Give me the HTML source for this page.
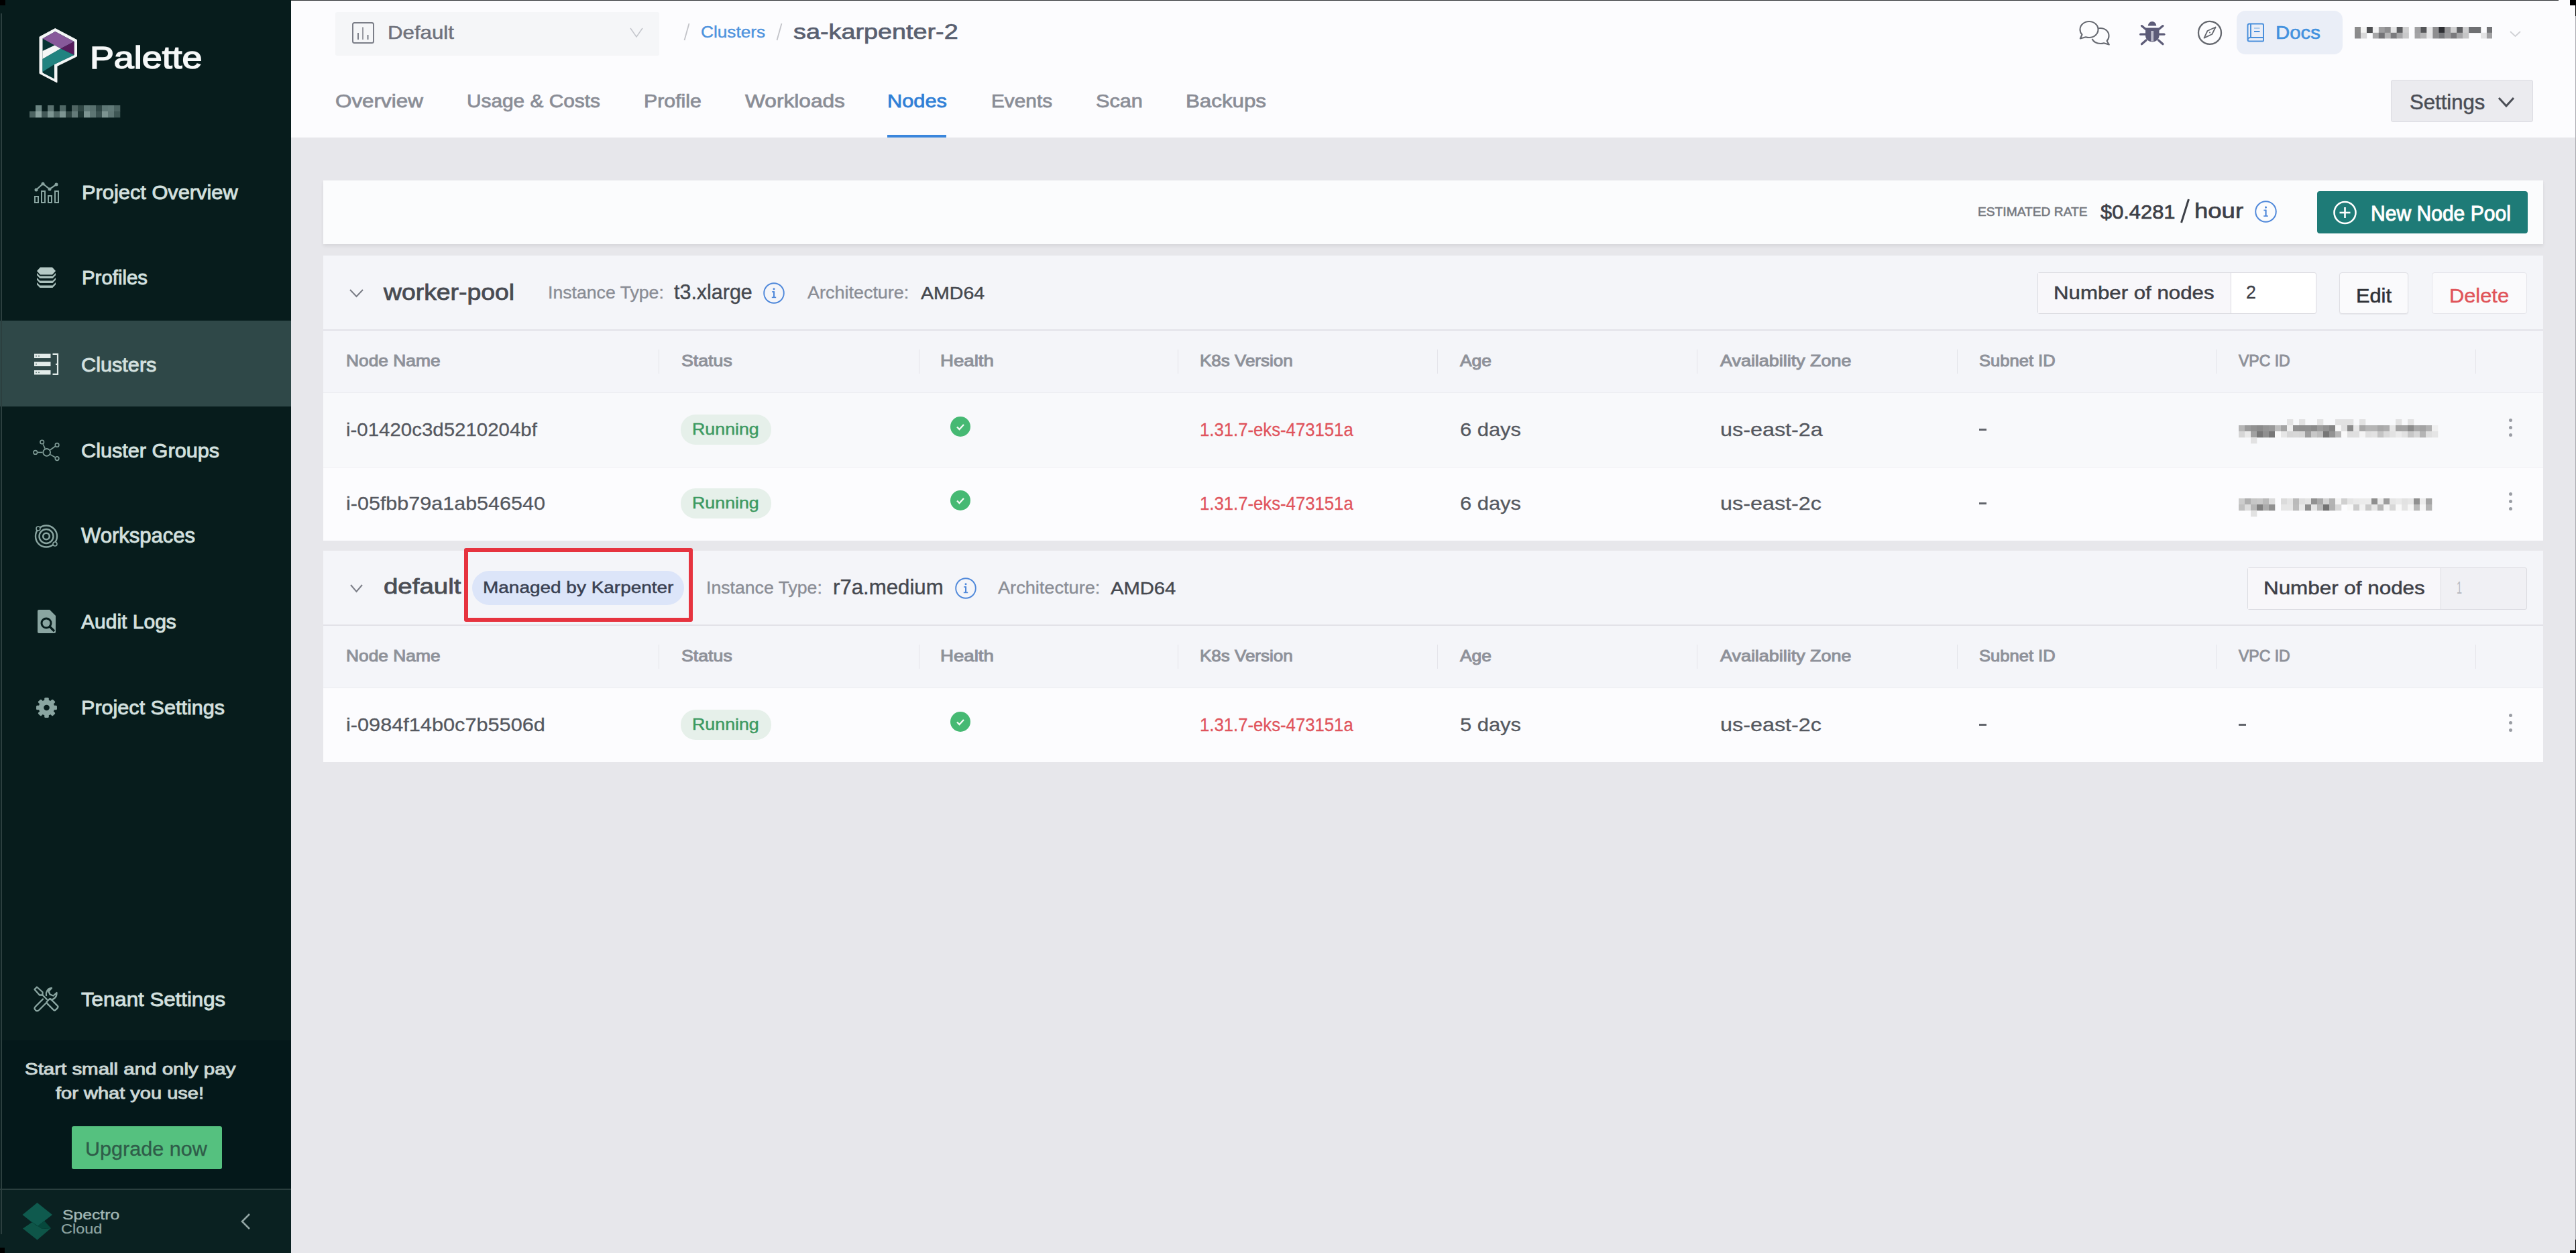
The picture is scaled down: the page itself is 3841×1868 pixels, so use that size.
<!DOCTYPE html><html><head><meta charset="utf-8"><title>Palette - Nodes</title><style>
*{margin:0;padding:0;box-sizing:border-box}
html,body{width:3841px;height:1868px;overflow:hidden;background:#e8e7ec}
body{position:relative;font-family:"Liberation Sans",sans-serif}
.t{position:absolute;white-space:nowrap;transform-origin:0 0}
.b{position:absolute}
.s{position:absolute;overflow:visible}
</style></head><body><div class="b" style="left:0px;top:0px;width:434px;height:1868px;background:#071c1c;"></div>
<div class="b" style="left:0px;top:478px;width:434px;height:128px;background:#2f4848;"></div>
<div class="b" style="left:0px;top:1551px;width:434px;height:221px;background:#04181a;"></div>
<div class="b" style="left:0px;top:1772px;width:434px;height:2px;background:#2a3e3e;"></div>
<div class="b" style="left:0px;top:1774px;width:434px;height:94px;background:#0a2121;"></div>
<svg class="s" style="left:50px;top:36px;width:74px;height:94px;" viewBox="0 0 74 94" preserveAspectRatio="none"><path d="M32.3 6.5 L64.5 23.5 L64.5 48 L35 62.5 L35 87 L9 73.5 L9 19 Z" fill="#f4f6f6" stroke="#f4f6f6" stroke-width="1" stroke-linejoin="round"/><path d="M32.3 11 L60.5 26 L60.5 46 L31 60 L31 81.5 L13.5 72.5 L13.5 21.5 Z" fill="#073535"/><path d="M13.5 21.5 L32.3 11 L60.5 26 L40.5 36.5 L31.5 31.5 Z" fill="#87599a"/><path d="M40.5 36.5 L60.5 26 L60.5 46 Z" fill="#561b5c"/><path d="M13.5 40 L31.5 31.5 L40.5 36.5 L13.5 52 Z" fill="#f4f6f6"/><path d="M13.5 52 L40.5 36.5 L60.5 46 L31 60 L13.5 71 Z" fill="#218380"/></svg>
<div class="t" style="left:134.00px;top:63.58px;font-size:45.39px;line-height:45.39px;color:#f6f8f8;transform:scaleX(1.1852);-webkit-text-stroke:1.5px #f6f8f8;">Palette</div>
<svg class="s" style="left:44px;top:157px;width:135px;height:18px;" viewBox="0 0 135 18" preserveAspectRatio="none"><rect x="9" y="0" width="9.3" height="9.3" fill="#6b8582"/><rect x="27" y="0" width="9.3" height="9.3" fill="#5a716f"/><rect x="45" y="0" width="9.3" height="9.3" fill="#4f6765"/><rect x="63" y="0" width="9.3" height="9.3" fill="#4f6462"/><rect x="72" y="0" width="9.3" height="9.3" fill="#2f4644"/><rect x="81" y="0" width="9.3" height="9.3" fill="#5f7876"/><rect x="90" y="0" width="9.3" height="9.3" fill="#58706e"/><rect x="99" y="0" width="9.3" height="9.3" fill="#2e4544"/><rect x="108" y="0" width="9.3" height="9.3" fill="#5d7674"/><rect x="117" y="0" width="9.3" height="9.3" fill="#617a78"/><rect x="126" y="0" width="9.3" height="9.3" fill="#4c6462"/><rect x="0" y="9" width="9.3" height="9.3" fill="#4c6361"/><rect x="9" y="9" width="9.3" height="9.3" fill="#8aa19e"/><rect x="18" y="9" width="9.3" height="9.3" fill="#425857"/><rect x="27" y="9" width="9.3" height="9.3" fill="#7d9592"/><rect x="36" y="9" width="9.3" height="9.3" fill="#4f6664"/><rect x="45" y="9" width="9.3" height="9.3" fill="#7d9592"/><rect x="54" y="9" width="9.3" height="9.3" fill="#2f4543"/><rect x="63" y="9" width="9.3" height="9.3" fill="#647b79"/><rect x="72" y="9" width="9.3" height="9.3" fill="#1f3634"/><rect x="81" y="9" width="9.3" height="9.3" fill="#7c9491"/><rect x="90" y="9" width="9.3" height="9.3" fill="#5d7573"/><rect x="99" y="9" width="9.3" height="9.3" fill="#3a5150"/><rect x="108" y="9" width="9.3" height="9.3" fill="#7c9491"/><rect x="117" y="9" width="9.3" height="9.3" fill="#5f7775"/><rect x="126" y="9" width="9.3" height="9.3" fill="#3e5654"/></svg>
<div class="t" style="left:121.70px;top:272.51px;font-size:29.05px;line-height:29.05px;color:#d3e0df;transform:scaleX(1.0601);-webkit-text-stroke:0.9px #d3e0df;">Project Overview</div>
<div class="t" style="left:121.70px;top:400.21px;font-size:29.05px;line-height:29.05px;color:#d3e0df;transform:scaleX(1.0119);-webkit-text-stroke:0.9px #d3e0df;">Profiles</div>
<div class="t" style="left:121.40px;top:528.75px;font-size:29.47px;line-height:29.47px;color:#d3e0df;transform:scaleX(1.0402);-webkit-text-stroke:0.9px #d3e0df;">Clusters</div>
<div class="t" style="left:121.40px;top:656.58px;font-size:30.03px;line-height:30.03px;color:#d3e0df;transform:scaleX(1.0211);-webkit-text-stroke:0.9px #d3e0df;">Cluster Groups</div>
<div class="t" style="left:121.40px;top:784.39px;font-size:30.73px;line-height:30.73px;color:#d3e0df;transform:scaleX(1.0095);-webkit-text-stroke:0.9px #d3e0df;">Workspaces</div>
<div class="t" style="left:121.40px;top:911.94px;font-size:29.61px;line-height:29.61px;color:#d3e0df;transform:scaleX(1.0136);-webkit-text-stroke:0.9px #d3e0df;">Audit Logs</div>
<div class="t" style="left:121.40px;top:1039.76px;font-size:30.17px;line-height:30.17px;color:#d3e0df;transform:scaleX(1.0135);-webkit-text-stroke:0.9px #d3e0df;">Project Settings</div>
<div class="t" style="left:121.00px;top:1474.58px;font-size:30.03px;line-height:30.03px;color:#d3e0df;transform:scaleX(1.0399);-webkit-text-stroke:0.9px #d3e0df;">Tenant Settings</div>
<svg class="s" style="left:50px;top:270px;width:38px;height:33px;" viewBox="0 0 38 33" preserveAspectRatio="none"><polyline points="4,13 14,4 24,12 34,5" fill="none" stroke="#8aa5a1" stroke-width="2.2"/><circle cx="4" cy="13" r="2.5" fill="#8aa5a1"/><circle cx="14" cy="4" r="2.5" fill="#8aa5a1"/><circle cx="24" cy="12" r="2.5" fill="#8aa5a1"/><circle cx="34" cy="5" r="2.5" fill="#8aa5a1"/><rect x="2" y="23" width="5" height="9" fill="none" stroke="#8aa5a1" stroke-width="2"/><rect x="12" y="15" width="5" height="17" fill="none" stroke="#8aa5a1" stroke-width="2"/><rect x="22" y="22" width="5" height="10" fill="none" stroke="#8aa5a1" stroke-width="2"/><rect x="32" y="15" width="5" height="17" fill="none" stroke="#8aa5a1" stroke-width="2"/></svg>
<svg class="s" style="left:55px;top:398px;width:28px;height:34px;" viewBox="0 0 28 34" preserveAspectRatio="none"><path d="M5 0.5 H23 L28 6 L23 11.5 H5 L0 6 Z" fill="#b6cac6"/><path d="M0 9 L4.5 13.5 H23.5 L28 9 V12.3 L23.5 17 H4.5 L0 12.3 Z" fill="#a9bfbb"/><path d="M0 16 L4.5 20.5 H23.5 L28 16 V19.3 L23.5 24 H4.5 L0 19.3 Z" fill="#a9bfbb"/><path d="M0 23 L4.5 27.5 H23.5 L28 23 V26.3 L23.5 31 H4.5 L0 26.3 Z" fill="#a9bfbb"/></svg>
<svg class="s" style="left:50px;top:526px;width:38px;height:33px;" viewBox="0 0 38 33" preserveAspectRatio="none"><g fill="#e3ecea"><rect x="1" y="1.5" width="24.5" height="6.5"/><rect x="1" y="13.5" width="24.5" height="6.5"/><rect x="1" y="26" width="24.5" height="6.5"/></g><g fill="#6f8683"><rect x="3" y="4" width="2" height="1.6"/><rect x="3" y="16" width="2" height="1.6"/><rect x="3" y="28.5" width="2" height="1.6"/><rect x="7" y="4" width="2" height="1.6"/><rect x="7" y="28.5" width="2" height="1.6"/></g><path d="M28.5 1.8 H36 V31.8 H28.5 M33 17 H36" fill="none" stroke="#dfe9e7" stroke-width="2.2"/></svg>
<svg class="s" style="left:48px;top:654px;width:41px;height:34px;" viewBox="0 0 41 34" preserveAspectRatio="none"><circle cx="21.7" cy="20.4" r="5.4" fill="none" stroke="#819d98" stroke-width="1.8"/><circle cx="14.7" cy="5.0" r="2.8" fill="none" stroke="#819d98" stroke-width="1.6"/><line x1="19.09" y1="14.66" x2="16.19" y2="8.28" stroke="#819d98" stroke-width="1.6"/><circle cx="37.1" cy="9.4" r="2.8" fill="none" stroke="#819d98" stroke-width="1.6"/><line x1="26.83" y1="16.74" x2="34.17" y2="11.49" stroke="#819d98" stroke-width="1.6"/><circle cx="4.8" cy="20.4" r="2.8" fill="none" stroke="#819d98" stroke-width="1.6"/><line x1="15.40" y1="20.40" x2="8.40" y2="20.40" stroke="#819d98" stroke-width="1.6"/><circle cx="37.1" cy="29.6" r="2.8" fill="none" stroke="#819d98" stroke-width="1.6"/><line x1="27.11" y1="23.63" x2="34.01" y2="27.75" stroke="#819d98" stroke-width="1.6"/></svg>
<svg class="s" style="left:50px;top:780px;width:38px;height:39px;" viewBox="0 0 38 39" preserveAspectRatio="none"><circle cx="19" cy="19.5" r="16" fill="none" stroke="#8aa5a1" stroke-width="2.4"/><circle cx="19" cy="19.5" r="10.5" fill="none" stroke="#8aa5a1" stroke-width="2.4"/><circle cx="19" cy="19.5" r="4.8" fill="none" stroke="#8aa5a1" stroke-width="2.6"/><circle cx="7" cy="8" r="3" fill="#071c1c" stroke="#8aa5a1" stroke-width="1.6"/><circle cx="32" cy="31" r="3" fill="#071c1c" stroke="#8aa5a1" stroke-width="1.6"/></svg>
<svg class="s" style="left:54px;top:909px;width:31px;height:37px;" viewBox="0 0 31 37" preserveAspectRatio="none"><path d="M4 0 H20 L29 9 V33 Q29 35 27 35 H4 Q2 35 2 33 V2 Q2 0 4 0 Z" fill="#8aa5a1"/><circle cx="15" cy="20" r="7" fill="none" stroke="#071c1c" stroke-width="3"/><line x1="20" y1="25" x2="27" y2="32" stroke="#071c1c" stroke-width="3.4"/></svg>
<svg class="s" style="left:53px;top:1039px;width:33px;height:32px;" viewBox="0 0 32 32" preserveAspectRatio="none"><g fill="#8aa5a1"><circle cx="16" cy="16" r="11.5"/><rect x="12.8" y="1" width="6.4" height="8" rx="1.5" transform="rotate(0 16 16)"/><rect x="12.8" y="1" width="6.4" height="8" rx="1.5" transform="rotate(45 16 16)"/><rect x="12.8" y="1" width="6.4" height="8" rx="1.5" transform="rotate(90 16 16)"/><rect x="12.8" y="1" width="6.4" height="8" rx="1.5" transform="rotate(135 16 16)"/><rect x="12.8" y="1" width="6.4" height="8" rx="1.5" transform="rotate(180 16 16)"/><rect x="12.8" y="1" width="6.4" height="8" rx="1.5" transform="rotate(225 16 16)"/><rect x="12.8" y="1" width="6.4" height="8" rx="1.5" transform="rotate(270 16 16)"/><rect x="12.8" y="1" width="6.4" height="8" rx="1.5" transform="rotate(315 16 16)"/></g><circle cx="16" cy="16" r="4.2" fill="#071c1c"/></svg>
<svg class="s" style="left:50px;top:1470px;width:38px;height:38px;" viewBox="0 0 38 38" preserveAspectRatio="none"><g fill="none" stroke="#8aa5a1" stroke-width="2.3" stroke-linejoin="round" stroke-linecap="round"><path d="M1.5 5 L5 1.5 L13.5 9 L13.5 13.5 L9 13.5 Z"/><line x1="13.5" y1="13.5" x2="20" y2="20"/><rect x="19" y="23.5" width="18" height="8.5" rx="2.5" transform="rotate(45 28 27.75)"/><path d="M14 19.5 L3 30.5 C1 32.5 1 34 3 36 C5 38 6.5 37.5 8.5 35.5 L19.5 24.5"/><path d="M19 14 C18 9 21 3.5 27 3 L22.5 8 L24.5 12.5 L29.5 14.5 L34.5 10 C35 16 30 21 25 20"/></g></svg>
<div class="t" style="left:37.00px;top:1583.49px;font-size:23.04px;line-height:23.04px;color:#cbd7d5;transform:scaleX(1.2790);-webkit-text-stroke:0.9px #cbd7d5;">Start small and only pay</div>
<div class="t" style="left:83.00px;top:1618.90px;font-size:23.74px;line-height:23.74px;color:#cbd7d5;transform:scaleX(1.2227);-webkit-text-stroke:0.9px #cbd7d5;">for what you use!</div>
<div class="b" style="left:107px;top:1679px;width:224px;height:64px;background:#55c17f;border-radius:3px;"></div>
<div class="t" style="left:127.00px;top:1697.62px;font-size:29.75px;line-height:29.75px;color:#2f5c49;transform:scaleX(1.0268);-webkit-text-stroke:0.35px #2f5c49;">Upgrade now</div>
<svg class="s" style="left:33px;top:1792px;width:46px;height:57px;" viewBox="0 0 46 57" preserveAspectRatio="none"><path d="M0.5 19 L22.5 1 L45 19 L22.5 36.5 Z" fill="#0f5a4e"/><path d="M1 39.5 L15 30 L30 40 L43 39 L22.5 56.5 Z" fill="#0e5548"/><path d="M11 27 L22.5 36.5 L33 28 L43 39 L30 40 Z" fill="#06483c"/></svg>
<div class="t" style="left:93.40px;top:1800.72px;font-size:20.53px;line-height:20.53px;color:#a3b8b5;transform:scaleX(1.2042);-webkit-text-stroke:0.4px #a3b8b5;">Spectro</div>
<div class="t" style="left:91.30px;top:1823.19px;font-size:19.97px;line-height:19.97px;color:#8ea5a2;transform:scaleX(1.1770);-webkit-text-stroke:0.2px #8ea5a2;">Cloud</div>
<svg class="s" style="left:358px;top:1808px;width:17px;height:26px;" viewBox="0 0 17 26" preserveAspectRatio="none"><polyline points="14,2 3,13 14,24" fill="none" stroke="#8fa3a1" stroke-width="2.6"/></svg>
<div class="b" style="left:1px;top:20px;width:2px;height:1820px;background:#2c3f3f;"></div>
<div class="b" style="left:0px;top:0px;width:8px;height:8px;background:#000000;"></div>
<div class="b" style="left:0px;top:1860px;width:7px;height:8px;background:#000000;"></div>
<div class="b" style="left:434px;top:0px;width:3407px;height:1868px;background:#e7e7eb;"></div>
<div class="b" style="left:434px;top:0px;width:3407px;height:205px;background:#fcfcfe;"></div>
<div class="b" style="left:434px;top:0px;width:3381px;height:1px;background:#303436;"></div>
<div class="b" style="left:3832px;top:0px;width:9px;height:8px;background:#000000;"></div>
<div class="b" style="left:3840px;top:8px;width:1px;height:16px;background:#000000;"></div>
<div class="b" style="left:3840px;top:24px;width:1px;height:1824px;background:#a9a9ae;"></div>
<div class="b" style="left:3840px;top:1848px;width:1px;height:20px;background:#000000;"></div>
<div class="b" style="left:3832px;top:1864px;width:9px;height:4px;background:#000000;"></div>
<div class="b" style="left:500px;top:18px;width:483px;height:65px;background:#f5f6f8;border-radius:3px;"></div>
<svg class="s" style="left:525px;top:33px;width:33px;height:32px;" viewBox="0 0 33 32" preserveAspectRatio="none"><rect x="1" y="1" width="31" height="30" rx="2.5" fill="none" stroke="#7b7e88" stroke-width="2"/><rect x="8" y="16" width="2" height="10" fill="#7b7e88"/><rect x="15" y="7.5" width="2" height="18.5" fill="#9a9ca4"/><rect x="22.5" y="19" width="2" height="7" fill="#7b7e88"/></svg>
<div class="t" style="left:578.30px;top:35.45px;font-size:27.23px;line-height:27.23px;color:#6f727c;transform:scaleX(1.1478);-webkit-text-stroke:0.5px #6f727c;">Default</div>
<svg class="s" style="left:939px;top:41px;width:20px;height:15px;" viewBox="0 0 20 15" preserveAspectRatio="none"><polyline points="1,1 10,14 19,1" fill="none" stroke="#c3c5cb" stroke-width="1.5"/></svg>
<svg class="s" style="left:1019px;top:34px;width:10px;height:27px;" viewBox="0 0 10 27" preserveAspectRatio="none"><line x1="8.5" y1="1" x2="1.5" y2="26" stroke="#c2c3c8" stroke-width="1.8"/></svg>
<div class="t" style="left:1045.00px;top:35.79px;font-size:24.58px;line-height:24.58px;color:#4d92dd;transform:scaleX(1.0663);-webkit-text-stroke:0.4px #4d92dd;">Clusters</div>
<svg class="s" style="left:1157px;top:34px;width:10px;height:27px;" viewBox="0 0 10 27" preserveAspectRatio="none"><line x1="8.5" y1="1" x2="1.5" y2="26" stroke="#c2c3c8" stroke-width="1.8"/></svg>
<div class="t" style="left:1183.40px;top:31.74px;font-size:31.15px;line-height:31.15px;color:#596070;transform:scaleX(1.2133);-webkit-text-stroke:0.7px #596070;">sa-karpenter-2</div>
<div class="t" style="left:500.00px;top:137.41px;font-size:27.51px;line-height:27.51px;color:#8a8d96;transform:scaleX(1.1416);-webkit-text-stroke:0.75px #8a8d96;">Overview</div>
<div class="t" style="left:696.00px;top:137.41px;font-size:27.51px;line-height:27.51px;color:#8a8d96;transform:scaleX(1.0845);-webkit-text-stroke:0.75px #8a8d96;">Usage &amp; Costs</div>
<div class="t" style="left:960.00px;top:137.41px;font-size:27.51px;line-height:27.51px;color:#8a8d96;transform:scaleX(1.1026);-webkit-text-stroke:0.75px #8a8d96;">Profile</div>
<div class="t" style="left:1111.00px;top:137.41px;font-size:27.51px;line-height:27.51px;color:#8a8d96;transform:scaleX(1.1506);-webkit-text-stroke:0.75px #8a8d96;">Workloads</div>
<div class="t" style="left:1323.00px;top:137.41px;font-size:27.51px;line-height:27.51px;color:#2f7fd6;transform:scaleX(1.1195);-webkit-text-stroke:0.75px #2f7fd6;">Nodes</div>
<div class="t" style="left:1478.00px;top:137.41px;font-size:27.51px;line-height:27.51px;color:#8a8d96;transform:scaleX(1.0833);-webkit-text-stroke:0.75px #8a8d96;">Events</div>
<div class="t" style="left:1634.00px;top:137.41px;font-size:27.51px;line-height:27.51px;color:#8a8d96;transform:scaleX(1.1155);-webkit-text-stroke:0.75px #8a8d96;">Scan</div>
<div class="t" style="left:1768.00px;top:137.41px;font-size:27.51px;line-height:27.51px;color:#8a8d96;transform:scaleX(1.1374);-webkit-text-stroke:0.75px #8a8d96;">Backups</div>
<div class="b" style="left:1323px;top:201px;width:88px;height:4px;background:#3a86dc;"></div>
<svg class="s" style="left:3090px;top:20px;width:70px;height:60px;" viewBox="0 0 70 60" preserveAspectRatio="none"><g fill="none" stroke="#676a72" stroke-width="2.1" stroke-linejoin="round"><path d="M20 35.2 C22 35.8 23.5 36 25 36 C32.5 36 38.5 30.6 38.5 24 C38.5 17.4 32.5 12 25 12 C17.5 12 11.5 17.4 11.5 24 C11.5 27 12.5 29.5 14.5 31.5 L11.8 37.5 Z"/><path d="M38.6 22.2 C40 22 41 22 42 22 C49 22 54.5 27 54.5 33.5 C54.5 36.5 53.5 39 51.5 41 L54.8 46.5 L47 44.2 C45.5 44.8 43.8 45 42 45 C36 45 31.5 42 29.5 38"/></g></svg>
<svg class="s" style="left:3185px;top:25px;width:45px;height:47px;" viewBox="0 0 45 47" preserveAspectRatio="none"><g fill="#5d5c78"><path d="M17.8 13.6 A6.25 6.6 0 0 1 30.3 13.6 Z"/><path d="M14 16.4 H34.5 V28 C34.5 33.5 30 37.4 24.25 37.4 C18.5 37.4 14 33.5 14 28 Z"/></g><g stroke="#5d5c78" stroke-width="3.2" stroke-linecap="round"><line x1="8.4" y1="13.6" x2="15" y2="19"/><line x1="40" y1="13.6" x2="33.5" y2="19"/><line x1="6.6" y1="26.2" x2="14" y2="26.2"/><line x1="41.9" y1="26.2" x2="34.5" y2="26.2"/><line x1="8.4" y1="40.7" x2="15" y2="35"/><line x1="40" y1="40.7" x2="33.5" y2="35"/></g><rect x="22.3" y="21" width="3.8" height="15.5" fill="#bdbccb"/></svg>
<svg class="s" style="left:3270px;top:25px;width:50px;height:47px;" viewBox="0 0 50 47" preserveAspectRatio="none"><circle cx="25" cy="23.9" r="17" fill="none" stroke="#65686f" stroke-width="2.3"/><path d="M16.5 31.6 L21.5 21 L33.6 15.5 L28.3 26 Z" fill="none" stroke="#65686f" stroke-width="1.8" stroke-linejoin="round"/><circle cx="25" cy="23.5" r="1" fill="#65686f"/></svg>
<div class="b" style="left:3335px;top:16px;width:158px;height:65px;background:#eaeef7;border-radius:13px;"></div>
<svg class="s" style="left:3350px;top:34px;width:27px;height:29px;" viewBox="0 0 27 29" preserveAspectRatio="none"><g fill="none" stroke="#4a90dc" stroke-width="2"><path d="M4 1.5 H23 Q25 1.5 25 3.5 V26 Q25 27.5 23.5 27.5 H4 Q1.5 27.5 1.5 25 V4 Q1.5 1.5 4 1.5 Z"/><line x1="6" y1="1.5" x2="6" y2="22"/><path d="M1.8 24.5 Q2.5 22 5 22 H25"/><line x1="11" y1="13" x2="19.5" y2="13"/></g><line x1="11" y1="8" x2="19.5" y2="8" stroke="#9cc2ea" stroke-width="1.6"/></svg>
<div class="t" style="left:3392.70px;top:35.04px;font-size:28.07px;line-height:28.07px;color:#4291de;transform:scaleX(1.0463);-webkit-text-stroke:0.6px #4291de;">Docs</div>
<svg class="s" style="left:3511px;top:40px;width:205px;height:17.6px;clip-path:inset(0 0 0 0);" viewBox="0 0 205 17.6" preserveAspectRatio="none"><rect x="0.0" y="0" width="9.25" height="9.100000000000001" fill="#8c8c8c"/><rect x="8.95" y="0" width="9.25" height="9.100000000000001" fill="#f3f3f3"/><rect x="17.9" y="0" width="9.25" height="9.100000000000001" fill="#4e4f52"/><rect x="26.849999999999998" y="0" width="9.25" height="9.100000000000001" fill="#f2f2f3"/><rect x="35.8" y="0" width="9.25" height="9.100000000000001" fill="#9e9ea0"/><rect x="44.75" y="0" width="9.25" height="9.100000000000001" fill="#8d8d8f"/><rect x="53.699999999999996" y="0" width="9.25" height="9.100000000000001" fill="#e5e5e6"/><rect x="62.64999999999999" y="0" width="9.25" height="9.100000000000001" fill="#5c5d60"/><rect x="71.6" y="0" width="9.25" height="9.100000000000001" fill="#cfcfd0"/><rect x="89.5" y="0" width="9.25" height="9.100000000000001" fill="#a0a0a2"/><rect x="98.44999999999999" y="0" width="9.25" height="9.100000000000001" fill="#555659"/><rect x="107.39999999999999" y="0" width="9.25" height="9.100000000000001" fill="#e6e6e7"/><rect x="116.35" y="0" width="9.25" height="9.100000000000001" fill="#8e8e90"/><rect x="125.29999999999998" y="0" width="9.25" height="9.100000000000001" fill="#2e2f33"/><rect x="134.25" y="0" width="9.25" height="9.100000000000001" fill="#959597"/><rect x="143.2" y="0" width="9.25" height="9.100000000000001" fill="#d0d0d1"/><rect x="152.14999999999998" y="0" width="9.25" height="9.100000000000001" fill="#5e5f62"/><rect x="161.1" y="0" width="9.25" height="9.100000000000001" fill="#cdcdce"/><rect x="170.04999999999998" y="0" width="9.25" height="9.100000000000001" fill="#6f7073"/><rect x="179.0" y="0" width="9.25" height="9.100000000000001" fill="#6f7073"/><rect x="196.89999999999998" y="0" width="9.25" height="9.100000000000001" fill="#737477"/><rect x="0.0" y="8.8" width="9.25" height="9.100000000000001" fill="#8a8a8c"/><rect x="8.95" y="8.8" width="9.25" height="9.100000000000001" fill="#d8d8d9"/><rect x="26.849999999999998" y="8.8" width="9.25" height="9.100000000000001" fill="#a7a7a9"/><rect x="35.8" y="8.8" width="9.25" height="9.100000000000001" fill="#747477"/><rect x="44.75" y="8.8" width="9.25" height="9.100000000000001" fill="#b4b4b5"/><rect x="53.699999999999996" y="8.8" width="9.25" height="9.100000000000001" fill="#7b7b7e"/><rect x="62.64999999999999" y="8.8" width="9.25" height="9.100000000000001" fill="#a6a6a8"/><rect x="71.6" y="8.8" width="9.25" height="9.100000000000001" fill="#c9c9ca"/><rect x="89.5" y="8.8" width="9.25" height="9.100000000000001" fill="#a3a3a5"/><rect x="98.44999999999999" y="8.8" width="9.25" height="9.100000000000001" fill="#b5b5b6"/><rect x="107.39999999999999" y="8.8" width="9.25" height="9.100000000000001" fill="#e5e5e6"/><rect x="116.35" y="8.8" width="9.25" height="9.100000000000001" fill="#8e8e90"/><rect x="125.29999999999998" y="8.8" width="9.25" height="9.100000000000001" fill="#77787b"/><rect x="134.25" y="8.8" width="9.25" height="9.100000000000001" fill="#9a9a9c"/><rect x="143.2" y="8.8" width="9.25" height="9.100000000000001" fill="#7a7a7d"/><rect x="152.14999999999998" y="8.8" width="9.25" height="9.100000000000001" fill="#a5a5a7"/><rect x="161.1" y="8.8" width="9.25" height="9.100000000000001" fill="#c5c5c6"/><rect x="187.95" y="8.8" width="9.25" height="9.100000000000001" fill="#e3e3e4"/><rect x="196.89999999999998" y="8.8" width="9.25" height="9.100000000000001" fill="#a1a1a3"/></svg>
<svg class="s" style="left:3742px;top:46px;width:17px;height:9px;" viewBox="0 0 17 9" preserveAspectRatio="none"><polyline points="1,1 8.5,8 16,1" fill="none" stroke="#d0d1d5" stroke-width="1.8"/></svg>
<div class="b" style="left:3565px;top:119px;width:212px;height:63px;background:#ebebef;border:1px solid #dcdce2;box-sizing:border-box;border-radius:3px;"></div>
<div class="t" style="left:3593.00px;top:135.81px;font-size:32.12px;line-height:32.12px;color:#4a4d55;transform:scaleX(0.9676);-webkit-text-stroke:0.5px #4a4d55;">Settings</div>
<svg class="s" style="left:3724px;top:144px;width:26px;height:17px;" viewBox="0 0 26 17" preserveAspectRatio="none"><polyline points="2,2 13,14 24,2" fill="none" stroke="#4a4d55" stroke-width="3"/></svg>
<div class="b" style="left:482px;top:269px;width:3310px;height:95px;background:#fbfcfd;box-shadow:0 3px 5px rgba(0,0,0,0.07);"></div>
<div class="t" style="left:2949.00px;top:306.79px;font-size:18.44px;line-height:18.44px;color:#76797f;transform:scaleX(1.0413);-webkit-text-stroke:0.55px #76797f;">ESTIMATED RATE</div>
<div class="t" style="left:3131.60px;top:300.82px;font-size:29.75px;line-height:29.75px;color:#3d4047;transform:scaleX(1.0363);-webkit-text-stroke:0.7px #3d4047;">$0.4281</div>
<svg class="s" style="left:3250px;top:296px;width:16px;height:37px;" viewBox="0 0 16 37" preserveAspectRatio="none"><line x1="13.5" y1="1" x2="2.5" y2="36" stroke="#3d4047" stroke-width="3"/></svg>
<div class="t" style="left:3272.40px;top:299.40px;font-size:31.42px;line-height:31.42px;color:#3d4047;transform:scaleX(1.1619);-webkit-text-stroke:0.7px #3d4047;">hour</div>
<svg class="s" style="left:3362px;top:299px;width:33px;height:33px;" viewBox="0 0 32 32" preserveAspectRatio="none"><circle cx="16" cy="16" r="14.8" fill="none" stroke="#4f88da" stroke-width="1.9"/><circle cx="16" cy="9.8" r="1.5" fill="#4f88da"/><rect x="15" y="13.2" width="2.1" height="9.5" fill="#4f88da"/><rect x="13" y="13.2" width="3" height="1.6" fill="#4f88da"/><rect x="12.8" y="21.6" width="6.4" height="1.6" fill="#4f88da"/></svg>
<div class="b" style="left:3455px;top:285px;width:314px;height:63px;background:#1e7b77;border-radius:4px;"></div>
<svg class="s" style="left:3478px;top:298px;width:37px;height:38px;" viewBox="0 0 37 38" preserveAspectRatio="none"><circle cx="18.5" cy="19" r="16" fill="none" stroke="#fff" stroke-width="2.6"/><line x1="18.5" y1="11" x2="18.5" y2="27" stroke="#fff" stroke-width="2.6"/><line x1="10.5" y1="19" x2="26.5" y2="19" stroke="#fff" stroke-width="2.6"/></svg>
<div class="t" style="left:3535.00px;top:301.81px;font-size:32.12px;line-height:32.12px;color:#ffffff;transform:scaleX(0.9359);-webkit-text-stroke:1.0px #ffffff;">New Node Pool</div>
<div class="b" style="left:482px;top:381px;width:3310px;height:110px;background:#f4f5f9;"></div>
<div class="b" style="left:482px;top:491px;width:3310px;height:2px;background:#e2e2e8;"></div>
<div class="b" style="left:482px;top:493px;width:3310px;height:93px;background:#f4f5f9;"></div>
<div class="t" style="left:516.00px;top:525.81px;font-size:24.44px;line-height:24.44px;color:#8e9199;transform:scaleX(1.0784);-webkit-text-stroke:1.0px #8e9199;">Node Name</div>
<div class="t" style="left:1016.00px;top:525.81px;font-size:24.44px;line-height:24.44px;color:#8e9199;transform:scaleX(1.0935);-webkit-text-stroke:1.0px #8e9199;">Status</div>
<div class="b" style="left:982px;top:521px;width:1px;height:36px;background:#e4e4ea;"></div>
<div class="t" style="left:1402.00px;top:525.81px;font-size:24.44px;line-height:24.44px;color:#8e9199;transform:scaleX(1.1307);-webkit-text-stroke:1.0px #8e9199;">Health</div>
<div class="b" style="left:1370px;top:521px;width:1px;height:36px;background:#e4e4ea;"></div>
<div class="t" style="left:1789.00px;top:525.81px;font-size:24.44px;line-height:24.44px;color:#8e9199;transform:scaleX(1.0631);-webkit-text-stroke:1.0px #8e9199;">K8s Version</div>
<div class="b" style="left:1756px;top:521px;width:1px;height:36px;background:#e4e4ea;"></div>
<div class="t" style="left:2177.00px;top:525.81px;font-size:24.44px;line-height:24.44px;color:#8e9199;transform:scaleX(1.0805);-webkit-text-stroke:1.0px #8e9199;">Age</div>
<div class="b" style="left:2143px;top:521px;width:1px;height:36px;background:#e4e4ea;"></div>
<div class="t" style="left:2565.00px;top:525.81px;font-size:24.44px;line-height:24.44px;color:#8e9199;transform:scaleX(1.1011);-webkit-text-stroke:1.0px #8e9199;">Availability Zone</div>
<div class="b" style="left:2530px;top:521px;width:1px;height:36px;background:#e4e4ea;"></div>
<div class="t" style="left:2951.00px;top:525.81px;font-size:24.44px;line-height:24.44px;color:#8e9199;transform:scaleX(1.0459);-webkit-text-stroke:1.0px #8e9199;">Subnet ID</div>
<div class="b" style="left:2918px;top:521px;width:1px;height:36px;background:#e4e4ea;"></div>
<div class="t" style="left:3338.00px;top:525.81px;font-size:24.44px;line-height:24.44px;color:#8e9199;transform:scaleX(0.9419);-webkit-text-stroke:1.0px #8e9199;">VPC ID</div>
<div class="b" style="left:3304px;top:521px;width:1px;height:36px;background:#e4e4ea;"></div>
<div class="b" style="left:3691px;top:521px;width:1px;height:36px;background:#e4e4ea;"></div>
<div class="b" style="left:482px;top:585px;width:3310px;height:1px;background:#ebebf0;"></div>
<div class="b" style="left:482px;top:586px;width:3310px;height:110px;background:#f8f9fb;"></div>
<div class="t" style="left:516.00px;top:626.48px;font-size:28.49px;line-height:28.49px;color:#55585f;transform:scaleX(1.0335);-webkit-text-stroke:0.3px #55585f;">i-01420c3d5210204bf</div>
<div class="b" style="left:1015px;top:618px;width:135px;height:45px;background:#e6f0ea;border-radius:22px;"></div>
<div class="t" style="left:1032.00px;top:627.81px;font-size:24.44px;line-height:24.44px;color:#3d9a62;transform:scaleX(1.0959);-webkit-text-stroke:0.5px #3d9a62;">Running</div>
<svg class="s" style="left:1417px;top:621px;width:30px;height:30px;" viewBox="0 0 30 30" preserveAspectRatio="none"><circle cx="15" cy="15" r="15" fill="#46b973"/><polyline points="10,15.5 13.5,19 20,12" fill="none" stroke="#f4fbf6" stroke-width="2.3"/></svg>
<div class="t" style="left:1789.00px;top:626.48px;font-size:28.49px;line-height:28.49px;color:#e0545c;transform:scaleX(0.9025);-webkit-text-stroke:0.3px #e0545c;">1.31.7-eks-473151a</div>
<div class="t" style="left:2177.00px;top:626.48px;font-size:28.49px;line-height:28.49px;color:#55585f;transform:scaleX(1.0833);-webkit-text-stroke:0.3px #55585f;">6 days</div>
<div class="t" style="left:2565.00px;top:626.48px;font-size:28.49px;line-height:28.49px;color:#55585f;transform:scaleX(1.1354);-webkit-text-stroke:0.3px #55585f;">us-east-2a</div>
<div class="b" style="left:2951px;top:639px;width:11px;height:2.5px;background:#62656c;"></div>
<svg class="s" style="left:3338px;top:625px;width:315px;height:40px;" viewBox="0 0 315 40" preserveAspectRatio="none"><rect x="72" y="0" width="9.3" height="9.3" fill="#e2e2e2"/><rect x="90" y="0" width="9.3" height="9.3" fill="#e2e2e2"/><rect x="117" y="0" width="9.3" height="9.3" fill="#e2e2e2"/><rect x="144" y="0" width="9.3" height="9.3" fill="#e2e2e2"/><rect x="153" y="0" width="9.3" height="9.3" fill="#e2e2e2"/><rect x="162" y="0" width="9.3" height="9.3" fill="#e2e2e2"/><rect x="180" y="0" width="9.3" height="9.3" fill="#e2e2e2"/><rect x="234" y="0" width="9.3" height="9.3" fill="#e2e2e2"/><rect x="252" y="0" width="9.3" height="9.3" fill="#e2e2e2"/><rect x="0" y="9" width="9.3" height="9.3" fill="#b6b6b6"/><rect x="9" y="9" width="9.3" height="9.3" fill="#9b9b9b"/><rect x="18" y="9" width="9.3" height="9.3" fill="#919191"/><rect x="27" y="9" width="9.3" height="9.3" fill="#8b8b8b"/><rect x="36" y="9" width="9.3" height="9.3" fill="#959595"/><rect x="45" y="9" width="9.3" height="9.3" fill="#999999"/><rect x="54" y="9" width="9.3" height="9.3" fill="#bebebe"/><rect x="63" y="9" width="9.3" height="9.3" fill="#a4a4a4"/><rect x="72" y="9" width="9.3" height="9.3" fill="#eeeeee"/><rect x="81" y="9" width="9.3" height="9.3" fill="#919191"/><rect x="90" y="9" width="9.3" height="9.3" fill="#8f8f8f"/><rect x="99" y="9" width="9.3" height="9.3" fill="#909090"/><rect x="108" y="9" width="9.3" height="9.3" fill="#8b8b8b"/><rect x="117" y="9" width="9.3" height="9.3" fill="#9c9c9c"/><rect x="126" y="9" width="9.3" height="9.3" fill="#929292"/><rect x="135" y="9" width="9.3" height="9.3" fill="#858585"/><rect x="144" y="9" width="9.3" height="9.3" fill="#f8f8f8"/><rect x="153" y="9" width="9.3" height="9.3" fill="#e0e0e0"/><rect x="162" y="9" width="9.3" height="9.3" fill="#8b8b8b"/><rect x="171" y="9" width="9.3" height="9.3" fill="#e7e7e7"/><rect x="180" y="9" width="9.3" height="9.3" fill="#a9a9a9"/><rect x="189" y="9" width="9.3" height="9.3" fill="#b6b6b6"/><rect x="198" y="9" width="9.3" height="9.3" fill="#b5b5b5"/><rect x="207" y="9" width="9.3" height="9.3" fill="#a8a8a8"/><rect x="216" y="9" width="9.3" height="9.3" fill="#aeaeae"/><rect x="225" y="9" width="9.3" height="9.3" fill="#e6e6e6"/><rect x="234" y="9" width="9.3" height="9.3" fill="#a3a3a3"/><rect x="243" y="9" width="9.3" height="9.3" fill="#a5a5a5"/><rect x="252" y="9" width="9.3" height="9.3" fill="#8d8d8d"/><rect x="261" y="9" width="9.3" height="9.3" fill="#a8a8a8"/><rect x="270" y="9" width="9.3" height="9.3" fill="#a3a3a3"/><rect x="279" y="9" width="9.3" height="9.3" fill="#b1b1b1"/><rect x="288" y="9" width="9.3" height="9.3" fill="#f0f0f0"/><rect x="0" y="18" width="9.3" height="9.3" fill="#d6d6d6"/><rect x="9" y="18" width="9.3" height="9.3" fill="#e9e9e9"/><rect x="18" y="18" width="9.3" height="9.3" fill="#a1a1a1"/><rect x="27" y="18" width="9.3" height="9.3" fill="#787878"/><rect x="36" y="18" width="9.3" height="9.3" fill="#909090"/><rect x="45" y="18" width="9.3" height="9.3" fill="#787878"/><rect x="54" y="18" width="9.3" height="9.3" fill="#f9f9f9"/><rect x="63" y="18" width="9.3" height="9.3" fill="#e6e6e6"/><rect x="72" y="18" width="9.3" height="9.3" fill="#d6d6d6"/><rect x="81" y="18" width="9.3" height="9.3" fill="#d8d8d8"/><rect x="90" y="18" width="9.3" height="9.3" fill="#d6d6d6"/><rect x="99" y="18" width="9.3" height="9.3" fill="#9e9e9e"/><rect x="108" y="18" width="9.3" height="9.3" fill="#c7c7c7"/><rect x="117" y="18" width="9.3" height="9.3" fill="#bcbcbc"/><rect x="126" y="18" width="9.3" height="9.3" fill="#767676"/><rect x="135" y="18" width="9.3" height="9.3" fill="#939393"/><rect x="144" y="18" width="9.3" height="9.3" fill="#b8b8b8"/><rect x="153" y="18" width="9.3" height="9.3" fill="#f9f9f9"/><rect x="162" y="18" width="9.3" height="9.3" fill="#dedede"/><rect x="171" y="18" width="9.3" height="9.3" fill="#dfdfdf"/><rect x="180" y="18" width="9.3" height="9.3" fill="#f4f4f4"/><rect x="189" y="18" width="9.3" height="9.3" fill="#dfdfdf"/><rect x="198" y="18" width="9.3" height="9.3" fill="#e2e2e2"/><rect x="207" y="18" width="9.3" height="9.3" fill="#c4c4c4"/><rect x="216" y="18" width="9.3" height="9.3" fill="#dadada"/><rect x="225" y="18" width="9.3" height="9.3" fill="#e2e2e2"/><rect x="234" y="18" width="9.3" height="9.3" fill="#ebebeb"/><rect x="243" y="18" width="9.3" height="9.3" fill="#e2e2e2"/><rect x="252" y="18" width="9.3" height="9.3" fill="#c6c6c6"/><rect x="261" y="18" width="9.3" height="9.3" fill="#d6d6d6"/><rect x="270" y="18" width="9.3" height="9.3" fill="#b4b4b4"/><rect x="279" y="18" width="9.3" height="9.3" fill="#dfdfdf"/><rect x="288" y="18" width="9.3" height="9.3" fill="#e5e5e5"/><rect x="18" y="27" width="9.3" height="9.3" fill="#e2e2e2"/></svg>
<div class="b" style="left:3740.5px;top:623.5px;width:5.0px;height:5.0px;background:#9a9da4;border-radius:50%;"></div>
<div class="b" style="left:3740.5px;top:634.5px;width:5.0px;height:5.0px;background:#9a9da4;border-radius:50%;"></div>
<div class="b" style="left:3740.5px;top:645.5px;width:5.0px;height:5.0px;background:#9a9da4;border-radius:50%;"></div>
<div class="b" style="left:482px;top:696px;width:3310px;height:110px;background:#fcfcfe;"></div>
<div class="b" style="left:482px;top:696px;width:3310px;height:1px;background:#efeff3;"></div>
<div class="t" style="left:516.00px;top:736.48px;font-size:28.49px;line-height:28.49px;color:#55585f;transform:scaleX(1.0712);-webkit-text-stroke:0.3px #55585f;">i-05fbb79a1ab546540</div>
<div class="b" style="left:1015px;top:728px;width:135px;height:45px;background:#e6f0ea;border-radius:22px;"></div>
<div class="t" style="left:1032.00px;top:737.81px;font-size:24.44px;line-height:24.44px;color:#3d9a62;transform:scaleX(1.0959);-webkit-text-stroke:0.5px #3d9a62;">Running</div>
<svg class="s" style="left:1417px;top:731px;width:30px;height:30px;" viewBox="0 0 30 30" preserveAspectRatio="none"><circle cx="15" cy="15" r="15" fill="#46b973"/><polyline points="10,15.5 13.5,19 20,12" fill="none" stroke="#f4fbf6" stroke-width="2.3"/></svg>
<div class="t" style="left:1789.00px;top:736.48px;font-size:28.49px;line-height:28.49px;color:#e0545c;transform:scaleX(0.9025);-webkit-text-stroke:0.3px #e0545c;">1.31.7-eks-473151a</div>
<div class="t" style="left:2177.00px;top:736.48px;font-size:28.49px;line-height:28.49px;color:#55585f;transform:scaleX(1.0833);-webkit-text-stroke:0.3px #55585f;">6 days</div>
<div class="t" style="left:2565.00px;top:736.48px;font-size:28.49px;line-height:28.49px;color:#55585f;transform:scaleX(1.1353);-webkit-text-stroke:0.3px #55585f;">us-east-2c</div>
<div class="b" style="left:2951px;top:749px;width:11px;height:2.5px;background:#62656c;"></div>
<svg class="s" style="left:3338px;top:743px;width:315px;height:40px;" viewBox="0 0 315 40" preserveAspectRatio="none"><rect x="0" y="0" width="9.3" height="9.3" fill="#cccccc"/><rect x="9" y="0" width="9.3" height="9.3" fill="#afafaf"/><rect x="18" y="0" width="9.3" height="9.3" fill="#c6c6c6"/><rect x="27" y="0" width="9.3" height="9.3" fill="#c9c9c9"/><rect x="36" y="0" width="9.3" height="9.3" fill="#bababa"/><rect x="45" y="0" width="9.3" height="9.3" fill="#dcdcdc"/><rect x="63" y="0" width="9.3" height="9.3" fill="#dbdbdb"/><rect x="72" y="0" width="9.3" height="9.3" fill="#e4e4e4"/><rect x="81" y="0" width="9.3" height="9.3" fill="#bababa"/><rect x="90" y="0" width="9.3" height="9.3" fill="#dfdfdf"/><rect x="99" y="0" width="9.3" height="9.3" fill="#e4e4e4"/><rect x="108" y="0" width="9.3" height="9.3" fill="#919191"/><rect x="117" y="0" width="9.3" height="9.3" fill="#a9a9a9"/><rect x="126" y="0" width="9.3" height="9.3" fill="#d4d4d4"/><rect x="135" y="0" width="9.3" height="9.3" fill="#b3b3b3"/><rect x="144" y="0" width="9.3" height="9.3" fill="#f4f4f4"/><rect x="153" y="0" width="9.3" height="9.3" fill="#d0d0d0"/><rect x="162" y="0" width="9.3" height="9.3" fill="#e5e5e5"/><rect x="171" y="0" width="9.3" height="9.3" fill="#eaeaea"/><rect x="180" y="0" width="9.3" height="9.3" fill="#ebebeb"/><rect x="189" y="0" width="9.3" height="9.3" fill="#ececec"/><rect x="198" y="0" width="9.3" height="9.3" fill="#8e8e8e"/><rect x="207" y="0" width="9.3" height="9.3" fill="#ebebeb"/><rect x="216" y="0" width="9.3" height="9.3" fill="#9d9d9d"/><rect x="225" y="0" width="9.3" height="9.3" fill="#e6e6e6"/><rect x="234" y="0" width="9.3" height="9.3" fill="#eaeaea"/><rect x="243" y="0" width="9.3" height="9.3" fill="#e2e2e2"/><rect x="252" y="0" width="9.3" height="9.3" fill="#e6e6e6"/><rect x="261" y="0" width="9.3" height="9.3" fill="#909090"/><rect x="270" y="0" width="9.3" height="9.3" fill="#ececec"/><rect x="279" y="0" width="9.3" height="9.3" fill="#a4a4a4"/><rect x="0" y="9" width="9.3" height="9.3" fill="#c1c1c1"/><rect x="9" y="9" width="9.3" height="9.3" fill="#dddddd"/><rect x="18" y="9" width="9.3" height="9.3" fill="#b6b6b6"/><rect x="27" y="9" width="9.3" height="9.3" fill="#808080"/><rect x="36" y="9" width="9.3" height="9.3" fill="#acacac"/><rect x="45" y="9" width="9.3" height="9.3" fill="#919191"/><rect x="63" y="9" width="9.3" height="9.3" fill="#e6e6e6"/><rect x="72" y="9" width="9.3" height="9.3" fill="#e6e6e6"/><rect x="81" y="9" width="9.3" height="9.3" fill="#bcbcbc"/><rect x="90" y="9" width="9.3" height="9.3" fill="#e9e9e9"/><rect x="99" y="9" width="9.3" height="9.3" fill="#8e8e8e"/><rect x="108" y="9" width="9.3" height="9.3" fill="#e5e5e5"/><rect x="117" y="9" width="9.3" height="9.3" fill="#b8b8b8"/><rect x="126" y="9" width="9.3" height="9.3" fill="#737373"/><rect x="135" y="9" width="9.3" height="9.3" fill="#b1b1b1"/><rect x="144" y="9" width="9.3" height="9.3" fill="#d9d9d9"/><rect x="162" y="9" width="9.3" height="9.3" fill="#f8f8f8"/><rect x="171" y="9" width="9.3" height="9.3" fill="#cccccc"/><rect x="180" y="9" width="9.3" height="9.3" fill="#f2f2f2"/><rect x="189" y="9" width="9.3" height="9.3" fill="#cacaca"/><rect x="198" y="9" width="9.3" height="9.3" fill="#e7e7e7"/><rect x="207" y="9" width="9.3" height="9.3" fill="#b7b7b7"/><rect x="216" y="9" width="9.3" height="9.3" fill="#f4f4f4"/><rect x="225" y="9" width="9.3" height="9.3" fill="#d7d7d7"/><rect x="234" y="9" width="9.3" height="9.3" fill="#f9f9f9"/><rect x="243" y="9" width="9.3" height="9.3" fill="#e4e4e4"/><rect x="252" y="9" width="9.3" height="9.3" fill="#f6f6f6"/><rect x="261" y="9" width="9.3" height="9.3" fill="#b9b9b9"/><rect x="270" y="9" width="9.3" height="9.3" fill="#f6f6f6"/><rect x="279" y="9" width="9.3" height="9.3" fill="#b4b4b4"/><rect x="18" y="18" width="9.3" height="9.3" fill="#e2e2e2"/></svg>
<div class="b" style="left:3740.5px;top:733.5px;width:5.0px;height:5.0px;background:#9a9da4;border-radius:50%;"></div>
<div class="b" style="left:3740.5px;top:744.5px;width:5.0px;height:5.0px;background:#9a9da4;border-radius:50%;"></div>
<div class="b" style="left:3740.5px;top:755.5px;width:5.0px;height:5.0px;background:#9a9da4;border-radius:50%;"></div>
<svg class="s" style="left:520px;top:430px;width:23px;height:15px;" viewBox="0 0 23 15" preserveAspectRatio="none"><polyline points="2,2 11.5,12 21,2" fill="none" stroke="#7b7e87" stroke-width="2"/></svg>
<div class="t" style="left:572.29px;top:419.77px;font-size:32.40px;line-height:32.40px;color:#484b52;transform:scaleX(1.1529);-webkit-text-stroke:0.8px #484b52;">worker-pool</div>
<div class="t" style="left:817.00px;top:423.96px;font-size:24.86px;line-height:24.86px;color:#8a8d95;transform:scaleX(1.0717);-webkit-text-stroke:0.35px #8a8d95;">Instance Type:</div>
<div class="t" style="left:1005.00px;top:420.03px;font-size:30.45px;line-height:30.45px;color:#45484f;-webkit-text-stroke:0.4px #45484f;">t3.xlarge</div>
<svg class="s" style="left:1138px;top:421px;width:32px;height:32px;" viewBox="0 0 32 32" preserveAspectRatio="none"><circle cx="16" cy="16" r="14.8" fill="none" stroke="#4f88da" stroke-width="1.9"/><circle cx="16" cy="9.8" r="1.5" fill="#4f88da"/><rect x="15" y="13.2" width="2.1" height="9.5" fill="#4f88da"/><rect x="13" y="13.2" width="3" height="1.6" fill="#4f88da"/><rect x="12.8" y="21.6" width="6.4" height="1.6" fill="#4f88da"/></svg>
<div class="t" style="left:1204.00px;top:423.98px;font-size:25.42px;line-height:25.42px;color:#8a8d95;transform:scaleX(1.0611);-webkit-text-stroke:0.35px #8a8d95;">Architecture:</div>
<div class="t" style="left:1373.00px;top:424.66px;font-size:25.56px;line-height:25.56px;color:#45484f;transform:scaleX(1.1176);-webkit-text-stroke:0.4px #45484f;">AMD64</div>
<div class="b" style="left:3038px;top:406px;width:416px;height:62px;background:#ffffff;border:1.5px solid #dadae0;box-sizing:border-box;border-radius:3px;"></div>
<div class="b" style="left:3326px;top:407px;width:1px;height:60px;background:#dadae0;"></div>
<div class="b" style="left:3039px;top:407px;width:287px;height:60px;background:#f8f7fa;"></div>
<div class="t" style="left:3062.00px;top:423.80px;font-size:26.82px;line-height:26.82px;color:#3e4047;transform:scaleX(1.1644);-webkit-text-stroke:0.5px #3e4047;">Number of nodes</div>
<div class="t" style="left:3349.30px;top:422.88px;font-size:26.96px;line-height:26.96px;color:#3e4047;transform:scaleX(0.9933);-webkit-text-stroke:0.3px #3e4047;">2</div>
<div class="b" style="left:3488px;top:406px;width:103px;height:62px;background:#fafafc;border:1.5px solid #dedee4;box-sizing:border-box;border-radius:4px;box-shadow:0 1px 2px rgba(0,0,0,0.06);"></div>
<div class="t" style="left:3513.00px;top:425.58px;font-size:30.03px;line-height:30.03px;color:#2f3237;transform:scaleX(1.0242);-webkit-text-stroke:0.6px #2f3237;">Edit</div>
<div class="b" style="left:3626px;top:406px;width:142px;height:62px;background:#fafafc;border:1.5px solid #e4e4ea;box-sizing:border-box;border-radius:4px;"></div>
<div class="t" style="left:3652.00px;top:425.58px;font-size:30.03px;line-height:30.03px;color:#e0545a;transform:scaleX(1.0259);-webkit-text-stroke:0.45px #e0545a;">Delete</div>
<div class="b" style="left:482px;top:821px;width:3310px;height:110px;background:#f4f5f9;"></div>
<div class="b" style="left:482px;top:931px;width:3310px;height:2px;background:#e2e2e8;"></div>
<div class="b" style="left:482px;top:933px;width:3310px;height:93px;background:#f4f5f9;"></div>
<div class="t" style="left:516.00px;top:965.81px;font-size:24.44px;line-height:24.44px;color:#8e9199;transform:scaleX(1.0784);-webkit-text-stroke:1.0px #8e9199;">Node Name</div>
<div class="t" style="left:1016.00px;top:965.81px;font-size:24.44px;line-height:24.44px;color:#8e9199;transform:scaleX(1.0935);-webkit-text-stroke:1.0px #8e9199;">Status</div>
<div class="b" style="left:982px;top:961px;width:1px;height:36px;background:#e4e4ea;"></div>
<div class="t" style="left:1402.00px;top:965.81px;font-size:24.44px;line-height:24.44px;color:#8e9199;transform:scaleX(1.1307);-webkit-text-stroke:1.0px #8e9199;">Health</div>
<div class="b" style="left:1370px;top:961px;width:1px;height:36px;background:#e4e4ea;"></div>
<div class="t" style="left:1789.00px;top:965.81px;font-size:24.44px;line-height:24.44px;color:#8e9199;transform:scaleX(1.0631);-webkit-text-stroke:1.0px #8e9199;">K8s Version</div>
<div class="b" style="left:1756px;top:961px;width:1px;height:36px;background:#e4e4ea;"></div>
<div class="t" style="left:2177.00px;top:965.81px;font-size:24.44px;line-height:24.44px;color:#8e9199;transform:scaleX(1.0805);-webkit-text-stroke:1.0px #8e9199;">Age</div>
<div class="b" style="left:2143px;top:961px;width:1px;height:36px;background:#e4e4ea;"></div>
<div class="t" style="left:2565.00px;top:965.81px;font-size:24.44px;line-height:24.44px;color:#8e9199;transform:scaleX(1.1011);-webkit-text-stroke:1.0px #8e9199;">Availability Zone</div>
<div class="b" style="left:2530px;top:961px;width:1px;height:36px;background:#e4e4ea;"></div>
<div class="t" style="left:2951.00px;top:965.81px;font-size:24.44px;line-height:24.44px;color:#8e9199;transform:scaleX(1.0459);-webkit-text-stroke:1.0px #8e9199;">Subnet ID</div>
<div class="b" style="left:2918px;top:961px;width:1px;height:36px;background:#e4e4ea;"></div>
<div class="t" style="left:3338.00px;top:965.81px;font-size:24.44px;line-height:24.44px;color:#8e9199;transform:scaleX(0.9419);-webkit-text-stroke:1.0px #8e9199;">VPC ID</div>
<div class="b" style="left:3304px;top:961px;width:1px;height:36px;background:#e4e4ea;"></div>
<div class="b" style="left:3691px;top:961px;width:1px;height:36px;background:#e4e4ea;"></div>
<div class="b" style="left:482px;top:1025px;width:3310px;height:1px;background:#ebebf0;"></div>
<div class="b" style="left:482px;top:1026px;width:3310px;height:110px;background:#fcfcfe;"></div>
<div class="t" style="left:516.00px;top:1066.48px;font-size:28.49px;line-height:28.49px;color:#55585f;transform:scaleX(1.0771);-webkit-text-stroke:0.3px #55585f;">i-0984f14b0c7b5506d</div>
<div class="b" style="left:1015px;top:1058px;width:135px;height:45px;background:#e6f0ea;border-radius:22px;"></div>
<div class="t" style="left:1032.00px;top:1067.81px;font-size:24.44px;line-height:24.44px;color:#3d9a62;transform:scaleX(1.0959);-webkit-text-stroke:0.5px #3d9a62;">Running</div>
<svg class="s" style="left:1417px;top:1061px;width:30px;height:30px;" viewBox="0 0 30 30" preserveAspectRatio="none"><circle cx="15" cy="15" r="15" fill="#46b973"/><polyline points="10,15.5 13.5,19 20,12" fill="none" stroke="#f4fbf6" stroke-width="2.3"/></svg>
<div class="t" style="left:1789.00px;top:1066.48px;font-size:28.49px;line-height:28.49px;color:#e0545c;transform:scaleX(0.9025);-webkit-text-stroke:0.3px #e0545c;">1.31.7-eks-473151a</div>
<div class="t" style="left:2177.00px;top:1066.48px;font-size:28.49px;line-height:28.49px;color:#55585f;transform:scaleX(1.0833);-webkit-text-stroke:0.3px #55585f;">5 days</div>
<div class="t" style="left:2565.00px;top:1066.48px;font-size:28.49px;line-height:28.49px;color:#55585f;transform:scaleX(1.1353);-webkit-text-stroke:0.3px #55585f;">us-east-2c</div>
<div class="b" style="left:2951px;top:1079px;width:11px;height:2.5px;background:#62656c;"></div>
<div class="b" style="left:3338px;top:1079px;width:11px;height:2.5px;background:#62656c;"></div>
<div class="b" style="left:3740.5px;top:1063.5px;width:5.0px;height:5.0px;background:#9a9da4;border-radius:50%;"></div>
<div class="b" style="left:3740.5px;top:1074.5px;width:5.0px;height:5.0px;background:#9a9da4;border-radius:50%;"></div>
<div class="b" style="left:3740.5px;top:1085.5px;width:5.0px;height:5.0px;background:#9a9da4;border-radius:50%;"></div>
<svg class="s" style="left:521px;top:870px;width:21px;height:15px;" viewBox="0 0 21 15" preserveAspectRatio="none"><polyline points="2,2 10.5,12 19,2" fill="none" stroke="#7b7e87" stroke-width="2"/></svg>
<div class="t" style="left:572.00px;top:859.34px;font-size:31.84px;line-height:31.84px;color:#4a4d54;transform:scaleX(1.2073);-webkit-text-stroke:0.8px #4a4d54;">default</div>
<div class="b" style="left:704px;top:851px;width:315.5px;height:51px;background:#dce5f9;border-radius:26px;"></div>
<div class="t" style="left:719.80px;top:864.27px;font-size:24.72px;line-height:24.72px;color:#394052;transform:scaleX(1.1309);-webkit-text-stroke:0.5px #394052;">Managed by Karpenter</div>
<div class="b" style="left:692px;top:817px;width:341px;height:110px;background:transparent;border:6px solid #e6333f;box-sizing:border-box;border-radius:3px;"></div>
<div class="t" style="left:1053.00px;top:863.96px;font-size:24.86px;line-height:24.86px;color:#8a8d95;transform:scaleX(1.0717);-webkit-text-stroke:0.35px #8a8d95;">Instance Type:</div>
<div class="t" style="left:1242.00px;top:860.03px;font-size:30.45px;line-height:30.45px;color:#45484f;transform:scaleX(1.0248);-webkit-text-stroke:0.4px #45484f;">r7a.medium</div>
<svg class="s" style="left:1424px;top:861px;width:32px;height:32px;" viewBox="0 0 32 32" preserveAspectRatio="none"><circle cx="16" cy="16" r="14.8" fill="none" stroke="#4f88da" stroke-width="1.9"/><circle cx="16" cy="9.8" r="1.5" fill="#4f88da"/><rect x="15" y="13.2" width="2.1" height="9.5" fill="#4f88da"/><rect x="13" y="13.2" width="3" height="1.6" fill="#4f88da"/><rect x="12.8" y="21.6" width="6.4" height="1.6" fill="#4f88da"/></svg>
<div class="t" style="left:1488.00px;top:863.98px;font-size:25.42px;line-height:25.42px;color:#8a8d95;transform:scaleX(1.0681);-webkit-text-stroke:0.35px #8a8d95;">Architecture:</div>
<div class="t" style="left:1656.00px;top:864.66px;font-size:25.56px;line-height:25.56px;color:#45484f;transform:scaleX(1.1412);-webkit-text-stroke:0.4px #45484f;">AMD64</div>
<div class="b" style="left:3351px;top:846px;width:417px;height:63px;background:#f0f0f4;border:1.5px solid #dadae0;box-sizing:border-box;border-radius:3px;"></div>
<div class="b" style="left:3352px;top:847px;width:287px;height:61px;background:#f8f7fa;"></div>
<div class="b" style="left:3639px;top:847px;width:1px;height:61px;background:#dadae0;"></div>
<div class="t" style="left:3375.00px;top:863.45px;font-size:27.23px;line-height:27.23px;color:#3e4047;transform:scaleX(1.1531);-webkit-text-stroke:0.5px #3e4047;">Number of nodes</div>
<div class="t" style="left:3663.00px;top:862.54px;font-size:26.54px;line-height:26.54px;color:#b8bac0;transform:scaleX(0.5424);">1</div></body></html>
